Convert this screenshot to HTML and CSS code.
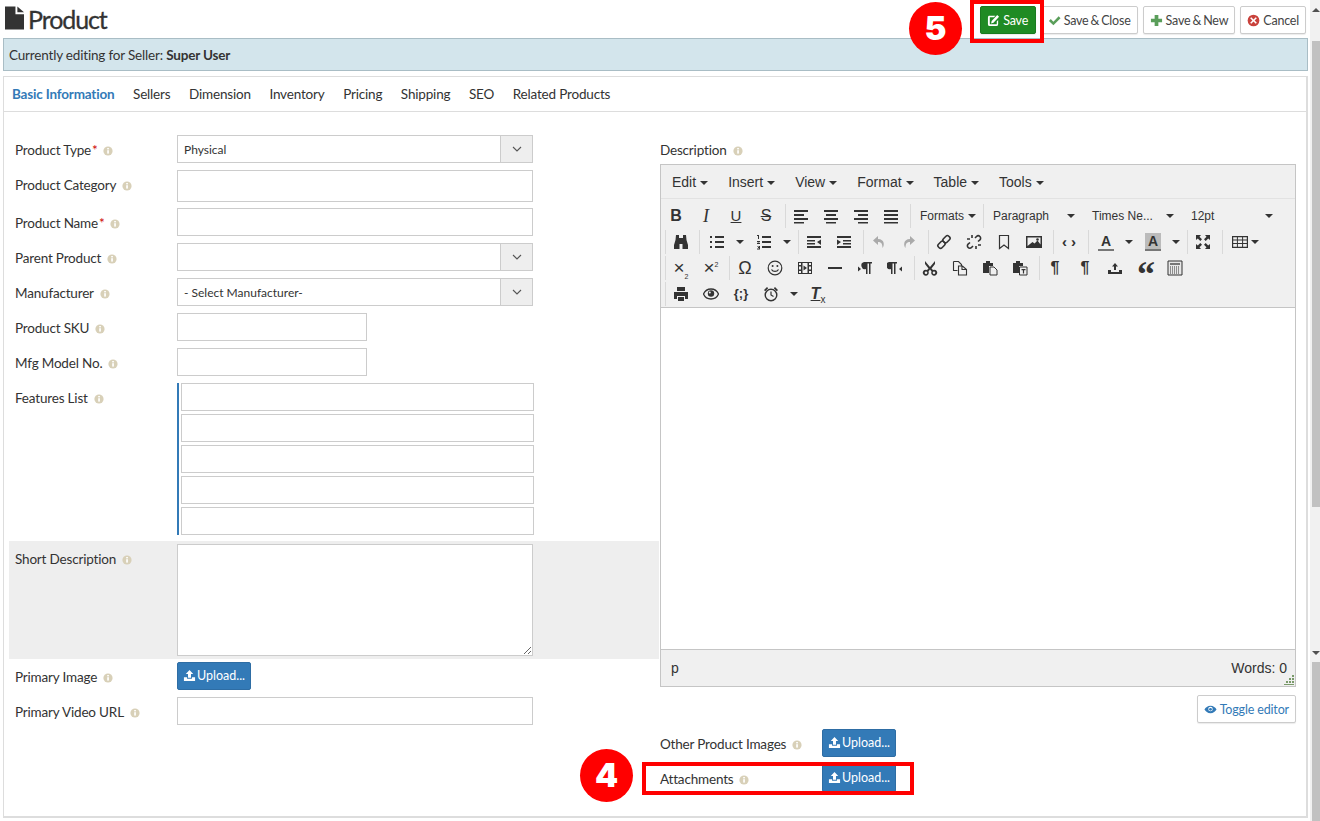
FILE: index.html
```html
<!DOCTYPE html>
<html lang="en">
<head>
<meta charset="UTF-8">
<title>Product</title>
<link rel="stylesheet" href="styles.css">
</head>
<body>
<!-- icon sprite -->
<svg class="sprite" xmlns="http://www.w3.org/2000/svg">
  <symbol id="i-info" viewBox="0 0 10 10"><circle cx="5" cy="5" r="4.6" fill="#d8d0b8"/><rect x="4.2" y="4.2" width="1.7" height="3.4" fill="#fff"/><rect x="4.2" y="2" width="1.7" height="1.4" fill="#fff"/></symbol>
  <symbol id="i-file" viewBox="0 0 20 24"><path d="M0 0h11v8h9v16H0z" fill="#333"/><path d="M13 0l7 6h-7z" fill="#333"/></symbol>
  <symbol id="i-edit" viewBox="0 0 14 14"><path d="M2 2h7L7.5 3.5H3v7.500h7.500V8L12 6.500V11a2 2 0 0 1-2 2H3a2 2 0 0 1-2-2V4a2 2 0 0 1 1-2z" fill="#fff"/><path d="M11 1l2 2-6 6.500-2.600.6.6-2.600z" fill="#fff"/></symbol>
  <symbol id="i-check" viewBox="0 0 14 14"><path d="M1 7.500l2-2 2.800 2.800L11.500 2.500l2 2-7.700 7.700z" fill="#5a9e5a"/></symbol>
  <symbol id="i-plus" viewBox="0 0 14 14"><path d="M5 1h4v4h4v4H9v4H5V9H1V5h4z" fill="#5a9e5a"/></symbol>
  <symbol id="i-cancel" viewBox="0 0 14 14"><circle cx="7" cy="7" r="6.300" fill="#c9423c"/><path d="M4.600 3.400L7 5.800l2.400-2.400 1.200 1.200L8.200 7l2.400 2.400-1.200 1.200L7 8.200l-2.400 2.400-1.200-1.200L5.800 7 3.400 4.600z" fill="#fff"/></symbol>
  <symbol id="i-upload" viewBox="0 0 14 14"><path d="M7 1l4 4.400H8.600v4H5.400v-4H3z" fill="#fff"/><path d="M1 9h3.400v1.600h5.200V9H13v4H1z" fill="#fff"/></symbol>
  <symbol id="i-eye" viewBox="0 0 14 14"><path d="M7 3c3 0 5.400 2 6.500 4C12.400 9 10 11 7 11S1.600 9 .5 7C1.600 5 4 3 7 3z" fill="#337ab7"/><circle cx="7" cy="6.500" r="2.400" fill="#fff"/><circle cx="7" cy="6.800" r="1.500" fill="#337ab7"/></symbol>
  <symbol id="i-alignleft" viewBox="0 0 16 16"><path d="M1 2h14v2H1zM1 6h10v2H1zM1 10h14v2H1zM1 14h10v1.500H1z" fill="#333"/></symbol>
  <symbol id="i-aligncenter" viewBox="0 0 16 16"><path d="M1 2h14v2H1zM3 6h10v2H3zM1 10h14v2H1zM3 14h10v1.500H3z" fill="#333"/></symbol>
  <symbol id="i-alignright" viewBox="0 0 16 16"><path d="M1 2h14v2H1zM5 6h10v2H5zM1 10h14v2H1zM5 14h10v1.500H5z" fill="#333"/></symbol>
  <symbol id="i-alignjustify" viewBox="0 0 16 16"><path d="M1 2h14v2H1zM1 6h14v2H1zM1 10h14v2H1zM1 14h14v1.500H1z" fill="#333"/></symbol>
  <symbol id="i-search" viewBox="0 0 16 16"><path d="M3 1h3v3h4V1h3l.5 5 1.500 5v4H9.500v-5h-3v5H1v-4l1.500-5z" fill="#333"/></symbol>
  <symbol id="i-ul" viewBox="0 0 16 16"><path d="M6 2h9v2H6zM6 7h9v2H6zM6 12h9v2H6zM1 2h2v2H1zM1 7h2v2H1zM1 12h2v2H1z" fill="#333"/></symbol>
  <symbol id="i-ol" viewBox="0 0 16 16"><path d="M6 2h9v2H6zM6 7h9v2H6zM6 12h9v2H6zM1 1h2v4H2V2H1zM1 7h3v1l-2 1h2v1H1V9l2-1H1zM1 12h3v3.500H1v-1h2v-.5H2v-1h1v-.5H1z" fill="#333"/></symbol>
  <symbol id="i-outdent" viewBox="0 0 16 16"><path d="M1 2h14v2H1zM1 6h8v1.500H1zM1 9h8v1.500H1zM1 12h14v2H1zM15 5.500v5.500L11 8z" fill="#333"/></symbol>
  <symbol id="i-indent" viewBox="0 0 16 16"><path d="M1 2h14v2H1zM7 6h8v1.500H7zM7 9h8v1.500H7zM1 12h14v2H1zM1 5.500v5.500L5 8z" fill="#333"/></symbol>
  <symbol id="i-undo" viewBox="0 0 16 16"><path d="M7 2L2 6.500 7 11V8c3 0 4.500 1.500 4.500 6 2-2 2.500-9-4.500-9z" fill="#aaa"/></symbol>
  <symbol id="i-redo" viewBox="0 0 16 16"><path d="M9 2l5 4.500L9 11V8c-3 0-4.500 1.500-4.500 6-2-2-2.500-9 4.500-9z" fill="#aaa"/></symbol>
  <symbol id="i-link" viewBox="0 0 16 16"><g fill="none" stroke="#333" stroke-width="1.600"><rect x="8" y="1.500" width="5" height="7.500" rx="2" transform="rotate(45 10.500 5.200)"/><rect x="3" y="7" width="5" height="7.500" rx="2" transform="rotate(45 5.500 10.700)"/></g></symbol>
  <symbol id="i-unlink" viewBox="0 0 16 16"><g fill="none" stroke="#333" stroke-width="1.600"><path d="M9 4l1.500-1.500a2.400 2.400 0 0 1 3.400 3.400L12 7.500M7 12l-1.500 1.500a2.400 2.400 0 0 1-3.400-3.400L4 8.500"/><path d="M6 1v3M1 5h3M10 15v-3M15 11h-3"/></g></symbol>
  <symbol id="i-bookmark" viewBox="0 0 16 16"><path d="M3.500 1.500h9v13L8 11l-4.500 3.500z" fill="none" stroke="#333" stroke-width="1.200"/></symbol>
  <symbol id="i-image" viewBox="0 0 16 16"><path d="M0 2h16v12H0z" fill="#333"/><path d="M1.500 3.500h13v7l-3-4-3 3-2-1.500-5 4z" fill="#f0f0f0"/><circle cx="11.500" cy="5.500" r="1.300" fill="#333"/></symbol>
  <symbol id="i-fullscreen" viewBox="0 0 16 16"><path d="M1 1h5L4.500 2.800 7 5.300 5.300 7 2.800 4.500 1 6zM15 1v5l-1.800-1.500L10.700 7 9 5.300l2.500-2.500L10 1zM1 15v-5l1.800 1.500L5.300 9 7 10.700l-2.500 2.500L6 15zM15 15h-5l1.500-1.800L9 10.700 10.700 9l2.500 2.500L15 10z" fill="#333"/></symbol>
  <symbol id="i-table" viewBox="0 0 16 16"><path d="M0 2h16v12H0zM1.200 3.200v2.400h3.700V3.200zm4.700 0v2.400h4.200V3.200zm5.200 0v2.400h3.700V3.200zM1.200 6.600v2.400h3.700V6.600zm4.700 0v2.400h4.200V6.600zm5.200 0v2.400h3.700V6.600zM1.200 10v2.800h3.700V10zm4.700 0v2.800h4.200V10zm5.200 0v2.800h3.700V10z" fill="#333" fill-rule="evenodd"/></symbol>
  <symbol id="i-smile" viewBox="0 0 16 16"><circle cx="8" cy="8" r="6.800" fill="none" stroke="#333" stroke-width="1.200"/><circle cx="5.600" cy="6" r="1" fill="#333"/><circle cx="10.400" cy="6" r="1" fill="#333"/><path d="M4.500 9.500c1.500 2.600 5.500 2.600 7 0" fill="none" stroke="#333" stroke-width="1.200"/></symbol>
  <symbol id="i-media" viewBox="0 0 16 16"><path d="M1 2h14v12H1zM2 3v2h2V3zm0 3.500v3h2v-3zM2 11v2h2v-2zM12 3v2h2V3zm0 3.500v3h2v-3zm0 4.500v2h2v-2zM5.500 3v10h5V3z" fill="#333" fill-rule="evenodd"/><path d="M6.500 5.500L10 8l-3.500 2.500z" fill="#333"/></symbol>
  <symbol id="i-hr" viewBox="0 0 16 16"><path d="M1 7h14v2H1z" fill="#333"/></symbol>
  <symbol id="i-ltr" viewBox="0 0 16 16"><path d="M7 2h8v1.500h-1.500V14H12V3.500h-1.500V14H9V9a3.500 3.500 0 0 1-2-7zM1 6.500v5L4 9z" fill="#333"/></symbol>
  <symbol id="i-rtl" viewBox="0 0 16 16"><path d="M2 2h8v1.500H8.500V14H7V3.500H5.500V14H4V9a3.500 3.500 0 0 1-2-7zM15 6.500v5L12 9z" fill="#333"/></symbol>
  <symbol id="i-cut" viewBox="0 0 16 16"><path d="M3 1l5 6 5-6v3l-3.500 4.500L11 10a3 3 0 1 1-1.500 1.500L8 9.500l-1.500 2A3 3 0 1 1 5 10l1.500-1.500L3 4zM4 11.500a1.300 1.300 0 1 0 0 2.600 1.300 1.300 0 0 0 0-2.600zm8 0a1.300 1.300 0 1 0 0 2.600 1.300 1.300 0 0 0 0-2.600z" fill="#333" fill-rule="evenodd"/></symbol>
  <symbol id="i-copy" viewBox="0 0 16 16"><path d="M1.500 1.500h5l3 3v1.500M1.500 1.500v9h4M6.500 6h4l4 3.500v5.500h-8zM10 6v3.500h4.500" fill="none" stroke="#333" stroke-width="1.100"/></symbol>
  <symbol id="i-paste" viewBox="0 0 16 16"><path d="M1 3h3V1h4v2h3v3H7v7H1z" fill="#333"/><path d="M8 7h4l3 3v5H8z" fill="#f0f0f0" stroke="#333"/></symbol>
  <symbol id="i-pastetext" viewBox="0 0 16 16"><path d="M1 3h3V1h4v2h3v3H7v7H1z" fill="#333"/><path d="M7.500 7h7.500v8H7.500z" fill="#f0f0f0" stroke="#333"/><path d="M9.500 9h4v1.200h-1.400v3.300h-1.200v-3.300H9.500z" fill="#333"/></symbol>
  <symbol id="i-restore" viewBox="0 0 16 16"><path d="M8 3l3 3.500H9V10H7V6.500H5zM1 10h3v2h8v-2h3v4H1z" fill="#333"/></symbol>
  <symbol id="i-blocks" viewBox="0 0 16 16"><path d="M1 1h14v14H1z" fill="#e8e8e8" stroke="#333"/><path d="M3 3h10v2H3z" fill="#777"/><path d="M3 7h10M3 9h10M3 11h10M3 13h10" stroke="#333" stroke-dasharray="1 1"/></symbol>
  <symbol id="i-print" viewBox="0 0 16 16"><path d="M4 1h8v4H4zM1 6h14v7h-3v-3H4v3H1zM5 11h6v4H5z" fill="#333"/></symbol>
  <symbol id="i-preview" viewBox="0 0 16 16"><path d="M8 3c3.500 0 6.300 2.300 7.500 5-1.200 2.700-4 5-7.500 5S1.700 10.700.5 8C1.700 5.300 4.500 3 8 3z" fill="none" stroke="#333" stroke-width="1.300"/><circle cx="8" cy="7.500" r="3.200" fill="#333"/><circle cx="6.800" cy="6.500" r="1" fill="#f0f0f0"/></symbol>
  <symbol id="i-clock" viewBox="0 0 16 16"><circle cx="8" cy="9" r="5.800" fill="none" stroke="#333" stroke-width="1.400"/><path d="M8 5.500V9l2.500 1.500" fill="none" stroke="#333" stroke-width="1.200"/><path d="M1 4l3-3 1.200 1.200-3 3zM15 4l-3-3-1.200 1.200 3 3z" fill="#333"/></symbol>
</svg>

<div class="screen">
  <div class="page">
    <header class="top-bar">
      <h1 class="page-title"><svg class="title-icon"><use href="#i-file"/></svg>Product</h1>
      <div class="actions">
        <button class="btn btn-green"><svg class="bi"><use href="#i-edit"/></svg>Save</button>
        <button class="btn"><svg class="bi"><use href="#i-check"/></svg>Save &amp; Close</button>
        <button class="btn"><svg class="bi"><use href="#i-plus"/></svg>Save &amp; New</button>
        <button class="btn"><svg class="bi"><use href="#i-cancel"/></svg>Cancel</button>
      </div>
    </header>

    <div class="seller-note">Currently editing for Seller: <b>Super User</b></div>

    <section class="panel">
      <nav class="tabs">
        <a class="tab active">Basic Information</a>
        <a class="tab">Sellers</a>
        <a class="tab">Dimension</a>
        <a class="tab">Inventory</a>
        <a class="tab">Pricing</a>
        <a class="tab">Shipping</a>
        <a class="tab">SEO</a>
        <a class="tab">Related Products</a>
      </nav>

      <div class="form">
        <!-- left column -->
        <div class="col-left">
          <div class="row">
            <label class="lbl">Product Type<i class="req">*</i><svg class="info"><use href="#i-info"/></svg></label>
            <div class="select"><span class="select-val">Physical</span><span class="select-btn"><svg class="chev" viewBox="0 0 10 6"><path d="M1 1l4 4 4-4" fill="none" stroke="#555" stroke-width="1.100"/></svg></span></div>
          </div>
          <div class="row row-tall">
            <label class="lbl">Product Category<svg class="info"><use href="#i-info"/></svg></label>
            <input class="field field-tall" type="text">
          </div>
          <div class="row">
            <label class="lbl">Product Name<i class="req">*</i><svg class="info"><use href="#i-info"/></svg></label>
            <input class="field" type="text">
          </div>
          <div class="row">
            <label class="lbl">Parent Product<svg class="info"><use href="#i-info"/></svg></label>
            <div class="select"><span class="select-val"></span><span class="select-btn"><svg class="chev" viewBox="0 0 10 6"><path d="M1 1l4 4 4-4" fill="none" stroke="#555" stroke-width="1.100"/></svg></span></div>
          </div>
          <div class="row">
            <label class="lbl">Manufacturer<svg class="info"><use href="#i-info"/></svg></label>
            <div class="select"><span class="select-val">- Select Manufacturer-</span><span class="select-btn"><svg class="chev" viewBox="0 0 10 6"><path d="M1 1l4 4 4-4" fill="none" stroke="#555" stroke-width="1.100"/></svg></span></div>
          </div>
          <div class="row">
            <label class="lbl">Product SKU<svg class="info"><use href="#i-info"/></svg></label>
            <input class="field field-short" type="text">
          </div>
          <div class="row">
            <label class="lbl">Mfg Model No.<svg class="info"><use href="#i-info"/></svg></label>
            <input class="field field-short" type="text">
          </div>
          <div class="row row-features">
            <label class="lbl">Features List<svg class="info"><use href="#i-info"/></svg></label>
            <div class="features">
              <input class="field" type="text">
              <input class="field" type="text">
              <input class="field" type="text">
              <input class="field" type="text">
              <input class="field" type="text">
            </div>
          </div>
          <div class="row row-short">
            <label class="lbl">Short Description<svg class="info"><use href="#i-info"/></svg></label>
            <textarea class="field area"></textarea>
          </div>
          <div class="row">
            <label class="lbl">Primary Image<svg class="info"><use href="#i-info"/></svg></label>
            <button class="btn-upload"><svg class="bi"><use href="#i-upload"/></svg>Upload...</button>
          </div>
          <div class="row">
            <label class="lbl">Primary Video URL<svg class="info"><use href="#i-info"/></svg></label>
            <input class="field" type="text">
          </div>
        </div>

        <!-- right column -->
        <div class="col-right">
          <label class="lbl lbl-desc">Description<svg class="info"><use href="#i-info"/></svg></label>
          <div class="editor">
            <div class="menubar">
              <span class="menu">Edit<i class="caret"></i></span>
              <span class="menu">Insert<i class="caret"></i></span>
              <span class="menu">View<i class="caret"></i></span>
              <span class="menu">Format<i class="caret"></i></span>
              <span class="menu">Table<i class="caret"></i></span>
              <span class="menu">Tools<i class="caret"></i></span>
            </div>
            <div class="toolbar">
              <div class="tb-row">
                <div class="tb-group tb-first">
                  <span class="tb"><b class="g g-b">B</b></span>
                  <span class="tb"><span class="g g-i">I</span></span>
                  <span class="tb"><span class="g g-u">U</span></span>
                  <span class="tb"><span class="g g-s">S</span></span>
                </div>
                <div class="tb-group">
                  <span class="tb"><svg class="ic"><use href="#i-alignleft"/></svg></span>
                  <span class="tb"><svg class="ic"><use href="#i-aligncenter"/></svg></span>
                  <span class="tb"><svg class="ic"><use href="#i-alignright"/></svg></span>
                  <span class="tb"><svg class="ic"><use href="#i-alignjustify"/></svg></span>
                </div>
                <div class="tb-group">
                  <span class="drop drop-formats">Formats<i class="caret"></i></span>
                </div>
                <div class="tb-group">
                  <span class="drop drop-para">Paragraph<i class="caret"></i></span>
                  <span class="drop drop-font">Times Ne...<i class="caret"></i></span>
                  <span class="drop drop-size">12pt<i class="caret"></i></span>
                </div>
              </div>
              <div class="tb-row">
                <div class="tb-group">
                  <span class="tb"><svg class="ic"><use href="#i-search"/></svg></span>
                </div>
                <div class="tb-group">
                  <span class="tb tb-split"><svg class="ic"><use href="#i-ul"/></svg><i class="caret"></i></span>
                  <span class="tb tb-split"><svg class="ic"><use href="#i-ol"/></svg><i class="caret"></i></span>
                </div>
                <div class="tb-group">
                  <span class="tb"><svg class="ic"><use href="#i-outdent"/></svg></span>
                  <span class="tb"><svg class="ic"><use href="#i-indent"/></svg></span>
                </div>
                <div class="tb-group">
                  <span class="tb"><svg class="ic"><use href="#i-undo"/></svg></span>
                  <span class="tb"><svg class="ic"><use href="#i-redo"/></svg></span>
                </div>
                <div class="tb-group">
                  <span class="tb"><svg class="ic"><use href="#i-link"/></svg></span>
                  <span class="tb"><svg class="ic"><use href="#i-unlink"/></svg></span>
                  <span class="tb"><svg class="ic"><use href="#i-bookmark"/></svg></span>
                  <span class="tb"><svg class="ic"><use href="#i-image"/></svg></span>
                </div>
                <div class="tb-group">
                  <span class="tb"><span class="g g-code">‹ ›</span></span>
                </div>
                <div class="tb-group">
                  <span class="tb tb-split"><span class="g g-a">A</span><i class="caret"></i></span>
                  <span class="tb tb-split"><span class="g g-a g-bg">A</span><i class="caret"></i></span>
                </div>
                <div class="tb-group">
                  <span class="tb"><svg class="ic"><use href="#i-fullscreen"/></svg></span>
                </div>
                <div class="tb-group">
                  <span class="tb tb-table"><svg class="ic"><use href="#i-table"/></svg><i class="caret"></i></span>
                </div>
              </div>
              <div class="tb-row">
                <div class="tb-group">
                  <span class="tb"><span class="g g-x">×<sub>2</sub></span></span>
                  <span class="tb"><span class="g g-x">×<sup>2</sup></span></span>
                </div>
                <div class="tb-group">
                  <span class="tb"><span class="g g-omega">Ω</span></span>
                  <span class="tb"><svg class="ic"><use href="#i-smile"/></svg></span>
                  <span class="tb"><svg class="ic"><use href="#i-media"/></svg></span>
                  <span class="tb"><svg class="ic"><use href="#i-hr"/></svg></span>
                  <span class="tb"><svg class="ic"><use href="#i-ltr"/></svg></span>
                  <span class="tb"><svg class="ic"><use href="#i-rtl"/></svg></span>
                </div>
                <div class="tb-group">
                  <span class="tb"><svg class="ic"><use href="#i-cut"/></svg></span>
                  <span class="tb"><svg class="ic"><use href="#i-copy"/></svg></span>
                  <span class="tb"><svg class="ic"><use href="#i-paste"/></svg></span>
                  <span class="tb"><svg class="ic"><use href="#i-pastetext"/></svg></span>
                </div>
                <div class="tb-group">
                  <span class="tb"><span class="g g-para">¶</span></span>
                  <span class="tb"><span class="g g-para">¶</span></span>
                  <span class="tb"><svg class="ic"><use href="#i-restore"/></svg></span>
                  <span class="tb"><span class="g g-quote">“</span></span>
                  <span class="tb"><svg class="ic"><use href="#i-blocks"/></svg></span>
                </div>
              </div>
              <div class="tb-row">
                <div class="tb-group">
                  <span class="tb"><svg class="ic"><use href="#i-print"/></svg></span>
                  <span class="tb"><svg class="ic"><use href="#i-preview"/></svg></span>
                  <span class="tb"><span class="g g-tpl">{;}</span></span>
                  <span class="tb tb-split tb-clock"><svg class="ic"><use href="#i-clock"/></svg><i class="caret"></i></span>
                  <span class="tb"><span class="g g-clear"><u>T</u><sub>x</sub></span></span>
                </div>
              </div>
            </div>
            <div class="edit-area"></div>
            <div class="statusbar">
              <span>p</span>
              <span class="words">Words: 0</span>
              <svg class="grip" viewBox="0 0 10 10"><path d="M8 0h2v2H8zM5 3h2v2H5zM8 3h2v2H8zM2 6h2v2H2zM5 6h2v2H5zM8 6h2v2H8zM0 9h10v1H0z" fill="#7a9a6a"/></svg>
            </div>
          </div>
          <div class="toggle-wrap">
            <button class="btn btn-toggle"><svg class="bi"><use href="#i-eye"/></svg>Toggle editor</button>
          </div>
          <div class="row row-files">
            <label class="lbl lbl-file">Other Product Images<svg class="info"><use href="#i-info"/></svg></label>
            <button class="btn-upload"><svg class="bi"><use href="#i-upload"/></svg>Upload...</button>
          </div>
          <div class="row row-files">
            <label class="lbl lbl-file">Attachments<svg class="info"><use href="#i-info"/></svg></label>
            <button class="btn-upload"><svg class="bi"><use href="#i-upload"/></svg>Upload...</button>
          </div>
        </div>
      </div>
    </section>
  </div>

  <!-- window scrollbar -->
  <div class="scrollbar">
    <i class="arrow-up"></i>
    <div class="thumb thumb-a"></div>
    <i class="arrow-down"></i>
    <div class="thumb thumb-b"></div>
  </div>

  <!-- tutorial marks drawn over the screenshot -->
  <div class="mark-box mark-box-save"></div>
  <div class="mark-num mark-num-5">5</div>
  <div class="mark-box mark-box-attach"></div>
  <div class="mark-num mark-num-4">4</div>
</div>
</body>
</html>
```

FILE: styles.css
```css
*{
    box-sizing: border-box;
}
html, body{
    margin: 0;
    height: 821px;
    overflow: hidden;
    background: #fff;
}
body{
    font-family: "Lato", "Liberation Sans", sans-serif;
    font-size: 14px;
    color: #333;
}
.sprite{
    display: none;
}
.screen{
    position: relative;
    display: flex;
    height: 821px;
}
.page{
    width: 1310px;
    padding: 0 2px 0 3px;
}

/* top bar */
.top-bar{
    display: flex;
    justify-content: space-between;
    height: 38px;
    padding: 6px 2px 0 2px;
}
.page-title{
    display: flex;
    align-items: flex-start;
    margin: 0;
    font-size: 25px;
    font-weight: 400;
    line-height: 26px;
    letter-spacing: -1.1px;
    color: #333;
    -webkit-text-stroke: 0.3px #333;
}
.title-icon{
    width: 19px;
    height: 24px;
    margin-right: 4px;
}
.actions{
    display: flex;
    gap: 5px;
}
.btn{
    display: flex;
    align-items: center;
    height: 28px;
    padding: 0 6px;
    font-family: "Lato", sans-serif;
    font-size: 12.5px;
    letter-spacing: -0.2px;
    word-spacing: -1px;
    color: #444;
    background: #fff;
    border: 1px solid #ccc;
    border-radius: 2px;
    box-shadow: 0 1px 1px rgba(0,0,0,.08);
}
.btn-green{
    justify-content: center;
    width: 56px;
    padding: 0;
    color: #fff;
    background: #1f8b24;
    border-color: #1a7a1f;
}
.bi{
    width: 13px;
    height: 13px;
    margin-right: 3px;
}
.seller-note{
    height: 33px;
    padding-left: 5px;
    line-height: 33px;
    font-size: 13.5px;
    letter-spacing: -0.18px;
    background: #d3e5ec;
    border: 1px solid #a9bdc5;
}
.seller-note b{
    font-weight: 700;
    color: #333;
}

/* panel + tabs */
.panel{
    height: 742px;
    margin-top: 5px;
    border: 1px solid #ddd;
    border-right-width: 2px;
    border-bottom-width: 2px;
}
.tabs{
    display: flex;
    gap: 18.6px;
    height: 35px;
    padding-left: 8px;
    line-height: 35px;
    font-size: 13.5px;
    letter-spacing: -0.18px;
    border-bottom: 1px solid #ddd;
}
.tab.active{
    font-weight: 700;
    color: #337ab7;
}

/* form layout */
.form{
    display: flex;
    padding: 23px 0 0 5px;
}
.col-left{
    width: 650px;
}
.col-right{
    width: 636px;
    margin-left: 1px;
}
.row{
    display: flex;
    margin-bottom: 7px;
}
.row-tall{
    margin-bottom: 6px;
}
.lbl{
    display: flex;
    align-items: center;
    flex: none;
    width: 168px;
    height: 28px;
    padding: 2px 0 0 6px;
    font-size: 13.5px;
    letter-spacing: -0.18px;
}
.req{
    margin-left: 1px;
    font-style: normal;
    color: #c00;
}
.info{
    width: 10px;
    height: 10px;
    margin-left: 6px;
    margin-top: 2px;
}
.req + .info{
    margin-left: 5px;
}
.field{
    display: block;
    width: 356px;
    height: 28px;
    border: 1px solid #ccc;
    background: #fff;
    border-radius: 0;
    outline: none;
}
.field-tall{
    height: 32px;
}
.field-short{
    width: 190px;
}
.select{
    display: flex;
    width: 356px;
    height: 28px;
    border: 1px solid #ccc;
    font-size: 12px;
    line-height: 27px;
}
.select-val{
    flex: 1;
    padding-left: 6px;
}
.select-btn{
    display: flex;
    align-items: center;
    justify-content: center;
    width: 32px;
    background: #eee;
    border-left: 1px solid #ccc;
}
.chev{
    width: 10px;
    height: 6px;
}
.row-features{
    margin-bottom: 6px;
}
.features{
    display: flex;
    flex-direction: column;
    gap: 3px;
    padding-left: 2px;
    border-left: 2px solid #337ab7;
}
.features .field{
    width: 353px;
}
.row-short{
    height: 118px;
    margin-bottom: 3px;
    padding-top: 3px;
    background: #eee;
}
.area{
    height: 112px;
    resize: vertical;
}
.btn-upload{
    display: flex;
    align-items: center;
    justify-content: center;
    width: 74px;
    height: 28px;
    padding: 0 0 2px;
    font-family: "Lato", sans-serif;
    font-size: 12.5px;
    color: #fff;
    background: #337ab7;
    border: 1px solid #2e6da4;
    border-radius: 2px;
}
.btn-upload .bi{
    width: 13px;
    height: 13px;
    margin-right: 1px;
}

/* editor */
.lbl-desc{
    margin-bottom: 1px;
    padding-left: 0;
}
.editor{
    display: flex;
    flex-direction: column;
    height: 523px;
    font-family: "Liberation Sans", Arial, sans-serif;
    border: 1px solid #c5c5c5;
}
.menubar{
    display: flex;
    gap: 20px;
    height: 34px;
    padding-left: 11px;
    line-height: 34px;
    font-size: 14px;
    background: #f0f0f0;
    border-bottom: 1px solid #e2e2e2;
}
.caret{
    display: inline-block;
    margin-left: 4px;
    vertical-align: 2px;
    border-top: 4px solid #333;
    border-left: 4px solid transparent;
    border-right: 4px solid transparent;
}
.toolbar{
    height: 109px;
    padding-top: 5px;
    background: #f0f0f0;
    border-bottom: 1px solid #c5c5c5;
}
.tb-row{
    display: flex;
    height: 26px;
}
.tb-group{
    display: flex;
    align-items: center;
    height: 24px;
    margin-left: 3px;
    padding-right: 1px;
    border-left: 1px solid #d9d9d9;
}
.tb-row .tb-group:first-child{
    margin-left: 4px;
    padding-right: 0;
}
.tb-row .tb-first:first-child{
    margin-left: 0;
    padding-right: 1px;
    border-left: none;
}
.tb{
    display: flex;
    align-items: center;
    justify-content: center;
    width: 30px;
    height: 24px;
    color: #333;
}
.tb-split{
    justify-content: flex-start;
    width: 47px;
    padding-left: 9px;
}
.tb-split .caret{
    margin-left: 11px;
    vertical-align: 0;
}
.tb-clock{
    padding-left: 7px;
}
.tb-table{
    justify-content: flex-start;
    width: 42px;
    padding-left: 9px;
}
.tb-table .caret{
    margin-left: 3px;
}
.ic{
    flex: none;
    width: 16px;
    height: 16px;
}
.g{
    display: inline-block;
    width: 16px;
    font-size: 15px;
    line-height: 16px;
    text-align: center;
}
.g-b{
    font-size: 16px;
    font-weight: 700;
}
.g-i{
    font-family: "Liberation Serif", serif;
    font-size: 18px;
    font-style: italic;
}
.g-u{
    font-size: 15px;
    text-decoration: underline;
}
.g-s{
    width: 18px;
    font-size: 16px;
    text-decoration: line-through;
}
.g-code{
    font-size: 15px;
    font-weight: 700;
    white-space: nowrap;
}
.g-a{
    height: 18px;
    font-size: 14px;
    font-weight: 700;
    border-bottom: 2px solid #777;
}
.g-bg{
    background: #bbb;
}
.g-x{
    font-size: 19px;
    white-space: nowrap;
}
.g-x sub, .g-x sup{
    font-size: 7px;
    line-height: 0;
}
.g-omega{
    font-size: 18px;
}
.g-para{
    font-size: 16px;
    font-weight: 700;
}
.g-quote{
    height: 16px;
    font-family: "Liberation Serif", serif;
    font-size: 36px;
    font-weight: 700;
    line-height: 28px;
}
.g-tpl{
    font-size: 13px;
    font-weight: 700;
}
.g-clear{
    font-size: 16px;
    font-style: italic;
    font-weight: 700;
    white-space: nowrap;
}
.g-clear sub{
    font-size: 10px;
    font-style: normal;
    font-weight: 400;
    line-height: 0;
}
.drop{
    display: flex;
    align-items: center;
    justify-content: space-between;
    padding-left: 9px;
    font-size: 12px;
    color: #333;
}
.drop .caret{
    flex: none;
}
.drop-formats{
    width: 68px;
    padding-right: 5px;
}
.drop-para{
    width: 99px;
    padding-right: 8px;
}
.drop-font{
    width: 99px;
    padding-right: 8px;
}
.drop-size{
    width: 98px;
    padding-right: 7px;
}
.edit-area{
    flex: 1;
    background: #fff;
}
.statusbar{
    position: relative;
    display: flex;
    justify-content: space-between;
    height: 37px;
    padding: 0 8px 0 10px;
    line-height: 36px;
    font-size: 14px;
    background: #f0f0f0;
    border-top: 1px solid #c5c5c5;
}
.grip{
    position: absolute;
    right: 1px;
    bottom: 1px;
    width: 10px;
    height: 10px;
}
.toggle-wrap{
    display: flex;
    justify-content: flex-end;
    margin-top: 8px;
}
.btn-toggle{
    letter-spacing: -0.15px;
    word-spacing: 0;
    color: #337ab7;
}
.row-files{
    margin-top: 6px;
    margin-bottom: 7px;
}
.row-files + .row-files{
    margin-top: 0;
}
.lbl-file{
    width: 162px;
    padding-left: 0;
}

/* scrollbar */
.scrollbar{
    flex: 1;
    display: flex;
    flex-direction: column;
    align-items: flex-end;
    background: #f1f1f1;
}
.arrow-up, .arrow-down{
    width: 0;
    border-left: 4px solid transparent;
    border-right: 4px solid transparent;
}
.arrow-up{
    margin-top: 8px;
    border-bottom: 4px solid #505050;
}
.arrow-down{
    margin-top: 144px;
    border-top: 4px solid #505050;
}
.thumb{
    width: 8px;
    background: #c1c1c1;
}
.thumb-a{
    height: 466px;
    margin-top: 29px;
}
.thumb-b{
    flex: 1;
    margin-top: 7px;
}

/* red marks */
.mark-box{
    position: absolute;
    border: 4px solid #f00;
}
.mark-box-save{
    left: 970px;
    top: 0;
    width: 74px;
    height: 43px;
}
.mark-box-attach{
    left: 642px;
    top: 762px;
    width: 272px;
    height: 33px;
}
.mark-num{
    position: absolute;
    width: 53px;
    height: 53px;
    border-radius: 50%;
    background: #f00;
    color: #fff;
    font-family: "Inter", "Liberation Sans", sans-serif;
    font-size: 33px;
    font-weight: 900;
    line-height: 53px;
    text-align: center;
}
.mark-num-5{
    left: 909px;
    top: 2px;
}
.mark-num-4{
    left: 580px;
    top: 749px;
}
```
